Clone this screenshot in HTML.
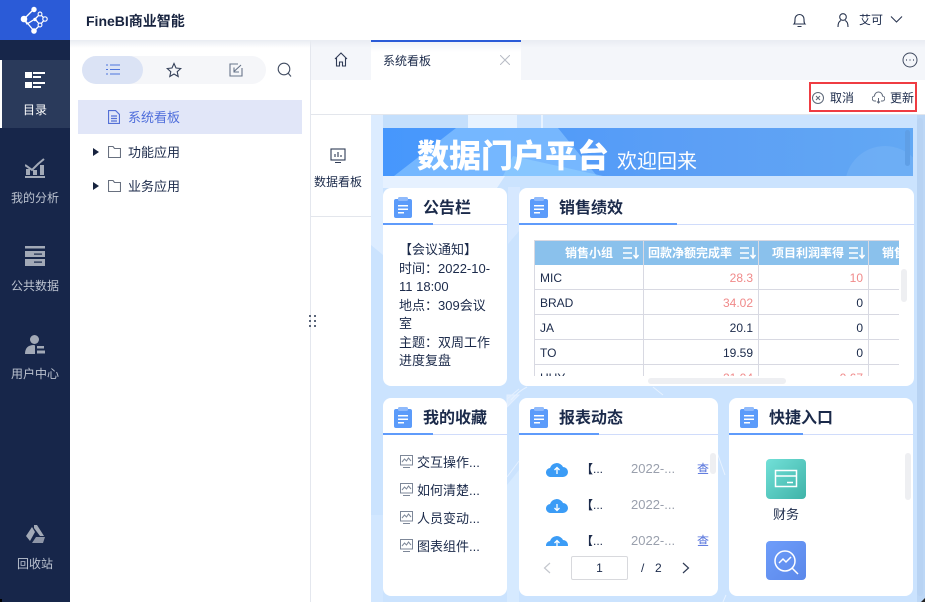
<!DOCTYPE html>
<html><head><meta charset="utf-8">
<style>
*{box-sizing:border-box;margin:0;padding:0}
html,body{width:925px;height:602px;overflow:hidden;background:#fff}
body{position:relative;font-family:"Liberation Sans","Noto Sans CJK SC",sans-serif;font-size:12px;color:#1b2a4a}
.a{position:absolute;white-space:nowrap}
svg{position:absolute;display:block}
.nav{position:absolute;left:0;width:70px;text-align:center;color:#bcc3d0;font-size:12px;line-height:16px}
.card{position:absolute;background:#fff;border-radius:8px;overflow:hidden}
.card .t{position:absolute;left:40px;top:10px;font-size:16px;line-height:22px;font-weight:700;color:#1b2a4a;white-space:nowrap}
.card .l1{position:absolute;left:0;right:0;top:36px;height:1px;background:#d0dcfb}
.card .l2{position:absolute;left:0;top:35px;height:2px;background:#5f9bfb}
.cell{position:absolute;height:25px;border-right:1px solid #d8d9e2;border-bottom:1px solid #d8d9e2;line-height:26px;font-size:12px;padding:0 5px;color:#1b2a4a;overflow:hidden;white-space:nowrap}
.r{text-align:right}.red{color:#f08a8a}
.hd{position:absolute;top:0;height:24px;background:#8ac1ec;border-right:1px solid #d8d9e2;color:#fff;font-weight:700;font-size:12px;line-height:24px;white-space:nowrap;overflow:hidden}
</style></head><body>
<svg width="0" height="0" style="position:absolute"><defs>
<symbol id="clip" viewBox="0 0 18 21"><rect x="0" y="2" width="18" height="19" rx="2" fill="#5b9bfa"/><rect x="4" y="0" width="10" height="4" rx="1.5" fill="#8fbafc"/><rect x="4" y="8" width="10" height="1.5" fill="#fff"/><rect x="4" y="11.5" width="10" height="1.5" fill="#fff"/><rect x="4" y="15" width="6" height="1.5" fill="#fff"/></symbol>
<symbol id="sort" viewBox="0 0 16 12"><path d="M0 1h9M0 6h9M0 11h9M13 0v10M10.5 8l2.5 3 2.500-3" stroke="#fff" stroke-width="1.5" fill="none"/></symbol>
<symbol id="fav" viewBox="0 0 13 13"><rect x=".5" y=".5" width="12" height="9.5" fill="none" stroke="#7d8798"/><path d="M2 7l2.500-3 2 2 2-3 2.500 3" fill="none" stroke="#7d8798"/><path d="M3 12.500h7" stroke="#7d8798"/></symbol>
<symbol id="cloud" viewBox="0 0 22 16"><path d="M5 16a4.500 4.500 0 0 1-1-9A7 7 0 0 1 17 6a5 5 0 0 1 0 10z" fill="#3b9cf6"/></symbol>
</defs></svg>

<!-- sidebar -->
<div class="a" style="left:0;top:0;width:70px;height:602px;background:#17264a"></div>
<div class="a" style="left:0;top:0;width:70px;height:40px;background:#2b5bd7"></div>
<svg style="left:20px;top:6px" width="30" height="28" viewBox="0 0 30 28"><g stroke="#fff" stroke-width="1.300" fill="none"><path d="M4 13L14 3M4 13l10 12M4 13l3 5 8-5 5 6M15 13l5-5 5 5-5 6-6 6"/></g><circle cx="14" cy="3.500" r="2.700" fill="#fff"/><circle cx="4" cy="13" r="3.300" fill="#fff"/><circle cx="14" cy="25" r="2.800" fill="#fff"/><circle cx="25" cy="13" r="2.200" fill="#2b5bd7" stroke="#fff" stroke-width="1.200"/><circle cx="20" cy="8" r="1.900" fill="#2b5bd7" stroke="#fff" stroke-width="1.100"/><circle cx="20" cy="19" r="1.900" fill="#2b5bd7" stroke="#fff" stroke-width="1.100"/><circle cx="15" cy="13.500" r="1.700" fill="#fff"/></svg>
<div class="a" style="left:0;top:60px;width:70px;height:68px;background:#2a3a5b"></div>
<div class="a" style="left:0;top:60px;width:2px;height:68px;background:#fff"></div>
<svg style="left:25px;top:72px" width="20" height="16" viewBox="0 0 20 16" fill="#fff"><rect width="7" height="6"/><rect x="8" y="0" width="12" height="2"/><rect x="8" y="4" width="8" height="2"/><rect y="10" width="7" height="6"/><rect x="8" y="10" width="12" height="2"/><rect x="8" y="14" width="8" height="2"/></svg>
<div class="nav" style="top:102px;color:#fff">目录</div>
<svg style="left:25px;top:158px" width="20" height="20" viewBox="0 0 20 20" fill="#a2a9b7"><rect y="18" width="20" height="2"/><rect x="1" y="11" width="4" height="6"/><rect x="8" y="12" width="4" height="5"/><rect x="15" y="7" width="4" height="10"/><path d="M0 7l7 5 6-6 6-5" fill="none" stroke="#a2a9b7" stroke-width="2"/></svg>
<div class="nav" style="top:190px">我的分析</div>
<svg style="left:25px;top:246px" width="20" height="20" viewBox="0 0 20 20" fill="#a2a9b7"><rect y="0" width="20" height="2.500"/><rect y="5" width="20" height="6"/><rect y="13" width="20" height="7"/><rect x="9" y="7.500" width="8" height="1.200" fill="#17264a"/><rect x="9" y="15.500" width="8" height="1.200" fill="#17264a"/></svg>
<div class="nav" style="top:278px">公共数据</div>
<svg style="left:25px;top:334px" width="20" height="20" viewBox="0 0 20 20" fill="#a2a9b7"><circle cx="9.500" cy="5.500" r="4.500"/><path d="M0 20c0-6 3-9 9-9 1 0 1 1 1 2v7z"/><rect x="12" y="12" width="7" height="2.500"/><rect x="12" y="16.500" width="8" height="3"/></svg>
<div class="nav" style="top:366px">用户中心</div>
<svg style="left:25px;top:524px" width="20" height="20" viewBox="0 0 20 20" fill="#a2a9b7"><path d="M9 1h3l7 11h-4L9 4zM7 3l3 5-5 9-4-5z"/><path d="M7 19l4-6h9l-2 6z" opacity=".85"/></svg>
<div class="nav" style="top:556px">回收站</div>
<div class="a" style="left:0;top:599px;width:2px;height:3px;background:#000"></div>

<!-- top header -->
<div class="a" style="left:86px;top:12px;font-size:14px;font-weight:700;line-height:18px;color:#17233f">FineBI商业智能</div>
<svg style="left:792px;top:12px" width="15" height="16" viewBox="0 0 15 16" fill="none" stroke="#2a3650" stroke-width="1.100"><path d="M2 12c1-1 1-2 1-5a4.500 4.500 0 0 1 9 0c0 3 0 4 1 5zM5.500 14.500h4"/></svg>
<svg style="left:836px;top:12px" width="14" height="16" viewBox="0 0 14 16" fill="none" stroke="#2a3650" stroke-width="1.100"><circle cx="7" cy="5" r="3.300"/><path d="M2 15c0-4 1.500-6 3-6.500M12 15c0-4-1.500-6-3-6.500"/></svg>
<div class="a" style="left:859px;top:12px;font-size:12px;line-height:17px;color:#1b2a4a">艾可</div>
<svg style="left:890px;top:15px" width="13" height="9" viewBox="0 0 13 9" fill="none" stroke="#2a3650" stroke-width="1.100"><path d="M1 1.500l5.500 5.500 5.500-5.500"/></svg>

<!-- left panel -->
<div class="a" style="left:82px;top:56px;width:184px;height:28px;border-radius:14px;background:#f5f6f9"></div>
<div class="a" style="left:82px;top:56px;width:61px;height:28px;border-radius:14px;background:#dbe3f5"></div>
<svg style="left:106px;top:63px" width="14" height="13" viewBox="0 0 14 13" stroke="#4d74dd" stroke-width="1.100"><path d="M4 2h10M4 6.500h10M4 11h10M0 2h2M0 6.500h2M0 11h2"/></svg>
<svg style="left:166px;top:62px" width="16" height="16" viewBox="0 0 16 16" fill="none" stroke="#333f58" stroke-width="1.100"><path d="M8 1.500l2 4.500 4.800.5-3.600 3.200 1 4.800L8 12l-4.200 2.500 1-4.800L1.200 6.500 6 6z"/></svg>
<svg style="left:229px;top:63px" width="14" height="14" viewBox="0 0 14 14" fill="none" stroke="#68758a" stroke-width="1.100"><path d="M9 1H1v12h12V5M12 2L5 8.500M5 4.500V9h5"/></svg>
<svg style="left:277px;top:62px" width="15" height="16" viewBox="0 0 15 16" fill="none" stroke="#434e63" stroke-width="1.100"><circle cx="7" cy="7" r="5.800"/><path d="M11 11l3 3.500"/></svg>
<div class="a" style="left:78px;top:100px;width:224px;height:34px;background:#e1e6f8"></div>
<svg style="left:108px;top:110px" width="12" height="14" viewBox="0 0 12 14" fill="none" stroke="#5470d6" stroke-width="1.200"><path d="M.5.500h7l4 4v9H.5zM3 6h6M3 8.500h6M3 11h6"/></svg>
<div class="a" style="left:128px;top:109px;font-size:13px;line-height:18px;color:#4f6edb">系统看板</div>
<svg style="left:93px;top:148px" width="6" height="8" viewBox="0 0 6 8"><path d="M0 0l6 4-6 4z" fill="#17233f"/></svg>
<svg style="left:108px;top:146px" width="13" height="12" viewBox="0 0 13 12" fill="none" stroke="#68707f" stroke-width="1.100"><path d="M.5.500h4.500l1.500 2h6v9H.5z"/></svg>
<div class="a" style="left:128px;top:144px;font-size:13px;line-height:18px">功能应用</div>
<svg style="left:93px;top:182px" width="6" height="8" viewBox="0 0 6 8"><path d="M0 0l6 4-6 4z" fill="#17233f"/></svg>
<svg style="left:108px;top:180px" width="13" height="12" viewBox="0 0 13 12" fill="none" stroke="#68707f" stroke-width="1.100"><path d="M.5.500h4.500l1.500 2h6v9H.5z"/></svg>
<div class="a" style="left:128px;top:178px;font-size:13px;line-height:18px">业务应用</div>
<div class="a" style="left:310px;top:40px;width:1px;height:562px;background:#e4e7ee"></div>
<svg style="left:309px;top:314px" width="8" height="14" viewBox="0 0 8 14" fill="#5a6579"><rect x="0" y="1" width="2" height="2"/><rect x="5" y="1" width="2" height="2"/><rect x="0" y="6" width="2" height="2"/><rect x="5" y="6" width="2" height="2"/><rect x="0" y="11" width="2" height="2"/><rect x="5" y="11" width="2" height="2"/></svg>

<!-- tabs -->
<div class="a" style="left:311px;top:40px;width:614px;height:40px;background:#f4f6fa"></div>
<div class="a" style="left:70px;top:40px;width:855px;height:8px;background:linear-gradient(#e9ecf2,rgba(255,255,255,0))"></div>
<svg style="left:334px;top:52px" width="14" height="15" viewBox="0 0 14 15" fill="none" stroke="#2f3b55" stroke-width="1.100"><path d="M1 7l6-6 6 6M2.500 6v8h3v-4h3v4h3V6"/></svg>
<div class="a" style="left:371px;top:40px;width:150px;height:40px;background:linear-gradient(#f0f2f7,#fff 10px);border-top:2px solid #2b5bd7"></div>
<div class="a" style="left:383px;top:53px;font-size:12px;line-height:17px">系统看板</div>
<svg style="left:500px;top:55px" width="10" height="10" viewBox="0 0 10 10" stroke="#b8bcc5"><path d="M0 0l10 10M10 0L0 10"/></svg>
<svg style="left:902px;top:52px" width="16" height="16" viewBox="0 0 16 16" fill="none" stroke="#3f4a60"><circle cx="8" cy="8" r="7"/><path d="M4 8h1M7.500 8h1M11 8h1" stroke-width="1.300"/></svg>

<!-- toolbar -->
<div class="a" style="left:311px;top:80px;width:614px;height:35px;background:#fff;border-bottom:1px solid #e3e6ec"></div>
<div class="a" style="left:809px;top:82px;width:108px;height:30px;border:2px solid #ef3c42"></div>
<svg style="left:812px;top:92px" width="12" height="12" viewBox="0 0 12 12" fill="none" stroke="#5d6778"><circle cx="6" cy="6" r="5.500"/><path d="M4 4l4 4M8 4l-4 4"/></svg>
<div class="a" style="left:830px;top:90px;font-size:12px;line-height:17px">取消</div>
<svg style="left:872px;top:91px" width="13" height="13" viewBox="0 0 13 13" fill="none" stroke="#5d6778"><path d="M4 10H3A2.500 2.500 0 0 1 2.500 5 4 4 0 0 1 10.500 5 2.500 2.500 0 0 1 10 10H9M6.500 7v5M5 10.500l1.500 1.500 1.500-1.500"/></svg>
<div class="a" style="left:890px;top:90px;font-size:12px;line-height:17px">更新</div>

<!-- strip -->
<svg style="left:330px;top:148px" width="16" height="16" viewBox="0 0 16 16" fill="none" stroke="#2f3b55" stroke-width="1.100"><rect x="1" y="1" width="14" height="11"/><path d="M5 9V6M8 9V4M11 9V7M5 14.500h6"/></svg>
<div class="a" style="left:314px;top:174px;font-size:12px;line-height:17px">数据看板</div>
<div class="a" style="left:311px;top:216px;width:60px;height:1px;background:#e3e6ec"></div>

<!-- dashboard bg -->
<div class="a" style="left:371px;top:115px;width:554px;height:487px;overflow:hidden;background:#cbe3fe">
<svg style="left:0;top:0" width="554" height="487" viewBox="0 0 554 487">
<path d="M0 0H12V61H134L126 73H12V120L0 125z" fill="#e6f1ff"/>
<path d="M0 130L12 140V0L0 0z" fill="#dcecff"/>
<path d="M12 0H97V13H12z" fill="#c4dffc"/>
<path d="M97 0H146V13H97z" fill="#e8f3ff"/>
<path d="M170 0h2v13h-2z" fill="#e8f3ff"/>
<path d="M137 72h12V115l-12 14z" fill="#d6e8ff"/>
<path d="M136 470V370l12-15v132H136z" fill="#d6eaff"/>
<path d="M12 400H0V487H12z" fill="#d2e7ff"/>
<path d="M136 280h12l-12 12zM148 274l-12 10M136 362l12-16" stroke="#e3efff" stroke-width="1" fill="#dcecff"/>
<path d="M140 285c5-6 10-10 16-13M282 272l10 8M340 320l14 40M355 480l-3 7" stroke="#e7f2ff" fill="none" stroke-width="1"/>
<rect x="546" y="0" width="8" height="487" fill="#bcd7f6"/>
</svg></div>
<!-- banner -->
<div class="a" style="left:383px;top:128px;width:530px;height:48px;overflow:hidden;background:linear-gradient(90deg,#4697fd 0,#5c9ff5 60%,#62a8f4 100%)">
<svg style="left:0;top:0" width="530" height="48" viewBox="0 0 530 48"><path d="M11 48L73 0H175L214 48z" fill="#7cbcff" opacity=".85"/><path d="M130 28l90 20H120z" fill="#8cc9ff" opacity=".8"/><circle cx="502" cy="58" r="40" fill="#72b1f5" opacity=".7"/><rect x="522" y="2" width="5" height="36" rx="2.500" fill="#5f9fe6"/></svg>
<div class="a" style="left:34px;top:8px;font-size:32px;line-height:40px;font-weight:900;color:#fff">数据门户平台</div>
<div class="a" style="left:234px;top:20px;font-size:20px;line-height:28px;color:#fff">欢迎回来</div>
</div>
<div class="a" style="left:917px;top:118px;width:6px;height:478px;border-radius:3px;background:#b8d3f3"></div>
<svg style="left:921px;top:598px" width="4" height="4"><path d="M0 4L4 0v4z" fill="#222"/></svg>

<!-- 公告栏 -->
<div class="card" style="left:383px;top:188px;width:124px;height:198px">
<svg style="left:11px;top:9px" width="18" height="21"><use href="#clip"/></svg>
<div class="t">公告栏</div><div class="l1"></div><div class="l2" style="width:50px"></div>
<div class="a" style="left:16px;top:53px;width:102px;line-height:18.500px;font-size:13px;white-space:normal">【会议通知】<br>时间：2022-10-<br>11 18:00<br>地点：309会议<br>室<br>主题：双周工作<br>进度复盘</div>
</div>

<!-- 销售绩效 -->
<div class="card" style="left:519px;top:188px;width:395px;height:198px">
<svg style="left:11px;top:9px" width="18" height="21"><use href="#clip"/></svg>
<div class="t">销售绩效</div><div class="l1"></div><div class="l2" style="width:158px"></div>
<div class="a" style="left:15px;top:52px;width:365px;height:136px;overflow:hidden;border-top:1px solid #d8d9e2;border-left:1px solid #d8d9e2">
<div style="position:relative;width:365px;height:136px">
<div class="hd" style="left:0;width:109px;padding-left:30px">销售小组<svg style="left:88px;top:6px" width="16" height="12"><use href="#sort"/></svg></div>
<div class="hd" style="left:109px;width:115px;padding-left:4px">回款净额完成率<svg style="left:96px;top:6px" width="16" height="12"><use href="#sort"/></svg></div>
<div class="hd" style="left:224px;width:110px;padding-left:13px">项目利润率得<svg style="left:90px;top:6px" width="16" height="12"><use href="#sort"/></svg></div>
<div class="hd" style="left:334px;width:31px;padding-left:13px;border-right:0">销售</div>
<div class="cell" style="left:0;top:24px;width:109px">MIC</div><div class="cell r red" style="left:109px;top:24px;width:115px">28.3</div><div class="cell r red" style="left:224px;top:24px;width:110px">10</div><div class="cell" style="left:334px;top:24px;width:31px;border-right:0"></div>
<div class="cell" style="left:0;top:49px;width:109px">BRAD</div><div class="cell r red" style="left:109px;top:49px;width:115px">34.02</div><div class="cell r" style="left:224px;top:49px;width:110px">0</div><div class="cell" style="left:334px;top:49px;width:31px;border-right:0"></div>
<div class="cell" style="left:0;top:74px;width:109px">JA</div><div class="cell r" style="left:109px;top:74px;width:115px">20.1</div><div class="cell r" style="left:224px;top:74px;width:110px">0</div><div class="cell" style="left:334px;top:74px;width:31px;border-right:0"></div>
<div class="cell" style="left:0;top:99px;width:109px">TO</div><div class="cell r" style="left:109px;top:99px;width:115px">19.59</div><div class="cell r" style="left:224px;top:99px;width:110px">0</div><div class="cell" style="left:334px;top:99px;width:31px;border-right:0"></div>
<div class="cell" style="left:0;top:124px;width:109px">HUY</div><div class="cell r red" style="left:109px;top:124px;width:115px">21.04</div><div class="cell r red" style="left:224px;top:124px;width:110px">0.67</div><div class="cell" style="left:334px;top:124px;width:31px;border-right:0"></div>
</div></div>
<div class="a" style="left:129px;top:190px;width:138px;height:6px;border-radius:3px;background:#eeeff2"></div>
<div class="a" style="left:382px;top:81px;width:6px;height:33px;border-radius:3px;background:#eeeff2"></div>
</div>

<!-- 我的收藏 -->
<div class="card" style="left:383px;top:398px;width:124px;height:198px">
<svg style="left:11px;top:9px" width="18" height="21"><use href="#clip"/></svg>
<div class="t">我的收藏</div><div class="l1"></div><div class="l2" style="width:50px"></div>
<svg style="left:17px;top:57px" width="13" height="13"><use href="#fav"/></svg><div class="a" style="left:34px;top:56px;font-size:13px;line-height:18px">交互操作...</div>
<svg style="left:17px;top:85px" width="13" height="13"><use href="#fav"/></svg><div class="a" style="left:34px;top:84px;font-size:13px;line-height:18px">如何清楚...</div>
<svg style="left:17px;top:113px" width="13" height="13"><use href="#fav"/></svg><div class="a" style="left:34px;top:112px;font-size:13px;line-height:18px">人员变动...</div>
<svg style="left:17px;top:141px" width="13" height="13"><use href="#fav"/></svg><div class="a" style="left:34px;top:140px;font-size:13px;line-height:18px">图表组件...</div>
</div>

<!-- 报表动态 -->
<div class="card" style="left:519px;top:398px;width:199px;height:198px">
<svg style="left:11px;top:9px" width="18" height="21"><use href="#clip"/></svg>
<div class="t">报表动态</div><div class="l1"></div><div class="l2" style="width:80px"></div>
<div class="a" style="left:0;top:50px;width:199px;height:98px;overflow:hidden">
<svg style="left:27px;top:13px" width="22" height="16"><use href="#cloud"/><path d="M11 13V7M8.500 9L11 6.500 13.500 9" stroke="#fff" fill="none" stroke-width="1.300"/></svg>
<div class="a" style="left:62px;top:12px;font-size:12px;line-height:18px;font-weight:700">【<span style="font-weight:400">...</span></div>
<div class="a" style="left:112px;top:12px;font-size:13px;line-height:18px;color:#9aa0ad">2022-...</div>
<div class="a" style="left:178px;top:12px;font-size:12px;line-height:18px;color:#4f6edb;width:12px;overflow:hidden">查</div>
<svg style="left:27px;top:49px" width="22" height="16"><use href="#cloud"/><path d="M11 7v6M8.500 11l2.500 2.500L13.500 11" stroke="#fff" fill="none" stroke-width="1.300"/></svg>
<div class="a" style="left:62px;top:48px;font-size:12px;line-height:18px;font-weight:700">【<span style="font-weight:400">...</span></div>
<div class="a" style="left:112px;top:48px;font-size:13px;line-height:18px;color:#9aa0ad">2022-...</div>
<svg style="left:27px;top:86px" width="22" height="16"><use href="#cloud"/><path d="M11 13V7M8.500 9L11 6.500 13.500 9" stroke="#fff" fill="none" stroke-width="1.300"/></svg>
<div class="a" style="left:62px;top:84px;font-size:12px;line-height:18px;font-weight:700">【<span style="font-weight:400">...</span></div>
<div class="a" style="left:112px;top:84px;font-size:13px;line-height:18px;color:#9aa0ad">2022-...</div>
<div class="a" style="left:178px;top:84px;font-size:12px;line-height:18px;color:#4f6edb;width:12px;overflow:hidden">查</div>
</div>
<div class="a" style="left:191px;top:55px;width:6px;height:21px;border-radius:3px;background:#eeeff2"></div>
<svg style="left:24px;top:164px" width="8" height="12" viewBox="0 0 8 12" fill="none" stroke="#c4c7ce" stroke-width="1.200"><path d="M7 1L1.500 6 7 11"/></svg>
<div class="a" style="left:52px;top:158px;width:57px;height:24px;background:#fff;border:1px solid #d8d9dd;border-radius:2px;text-align:center;line-height:22px;font-size:12px">1</div>
<div class="a" style="left:122px;top:161px;font-size:12px;line-height:18px">/</div>
<div class="a" style="left:136px;top:161px;font-size:12px;line-height:18px">2</div>
<svg style="left:163px;top:164px" width="8" height="12" viewBox="0 0 8 12" fill="none" stroke="#2f3b55" stroke-width="1.200"><path d="M1 1l5.500 5L1 11"/></svg>
</div>

<!-- 快捷入口 -->
<div class="card" style="left:729px;top:398px;width:184px;height:198px">
<svg style="left:11px;top:9px" width="18" height="21"><use href="#clip"/></svg>
<div class="t">快捷入口</div><div class="l1"></div><div class="l2" style="width:74px"></div>
<div class="a" style="left:37px;top:61px;width:40px;height:40px;border-radius:4px;background:linear-gradient(135deg,#72e0d8,#3fb3a8)"></div>
<svg style="left:37px;top:61px" width="40" height="40" viewBox="0 0 40 40" fill="none" stroke="#fff" stroke-width="1.500"><rect x="9.500" y="11.500" width="21" height="16"/><path d="M10 17h20"/><path d="M21 23.500h6"/></svg>
<div class="a" style="left:37px;top:108px;width:40px;text-align:center;font-size:13px;line-height:18px">财务</div>
<div class="a" style="left:37px;top:143px;width:40px;height:39px;border-radius:4px;background:linear-gradient(135deg,#6e9dfa,#5b88ea)"></div>
<svg style="left:37px;top:143px" width="40" height="39" viewBox="0 0 40 39" fill="none" stroke="#fff" stroke-width="1.500"><circle cx="19" cy="20" r="10"/><path d="M26 27l6 6M13 22l4-4 3 3 5-5"/></svg>
<div class="a" style="left:176px;top:55px;width:6px;height:47px;border-radius:3px;background:#eeeff2"></div>
</div>
</body></html>
